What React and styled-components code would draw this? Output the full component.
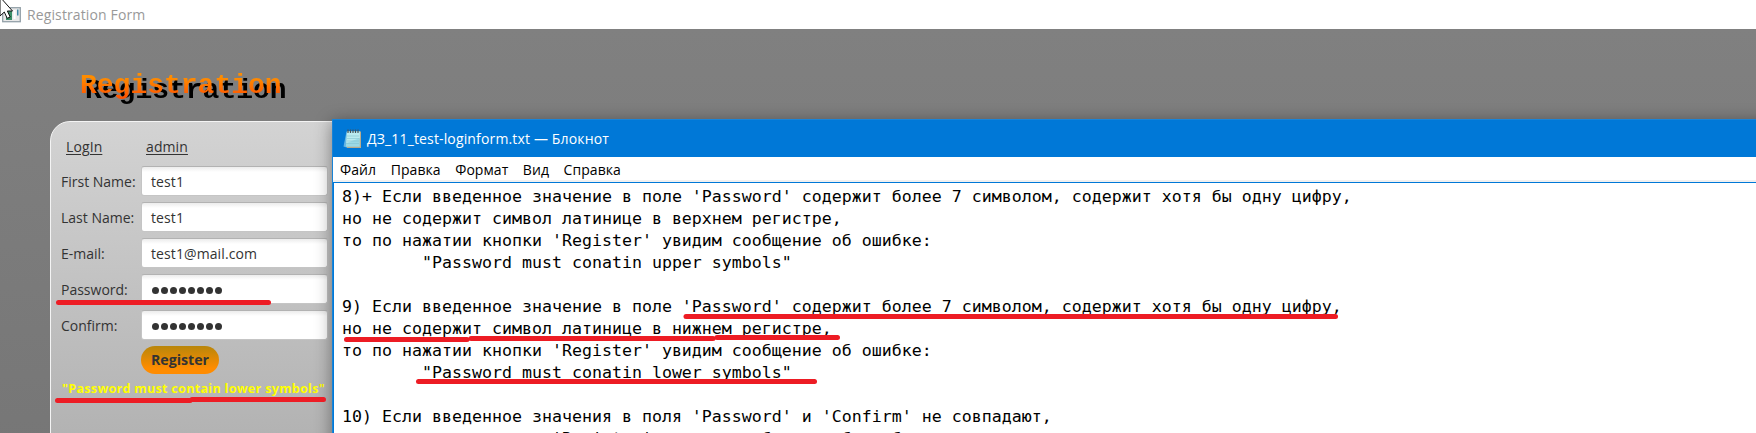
import React from 'react';
import styled, { createGlobalStyle } from 'styled-components';

const Global = createGlobalStyle`
  *, *::before, *::after { box-sizing: border-box; }
  body { margin: 0; overflow: hidden; background: #808080; }
`;

const Desktop = styled.div`
  position: relative;
  width: 1756px;
  height: 433px;
  overflow: hidden;
  font-family: 'Open Sans', 'Noto Sans', sans-serif;
  font-size: 14px;
`;

const FormWindow = styled.section`
  display: flex;
  flex-direction: column;
  height: 100%;
`;

const FormTitleBar = styled.header`
  display: flex;
  flex: none;
  align-items: center;
  gap: 6px;
  height: 29px;
  padding-left: 2px;
  background: #fff;
  color: #999;
  font-size: 14px;
  letter-spacing: 0.12px;
`;

const FormBody = styled.div`
  flex: 1;
  display: flex;
  flex-direction: column;
  padding-left: 50px;
  background: linear-gradient(#808080, #767676);
`;

const Heading = styled.h1`
  flex: none;
  height: 92px;
  margin: 0;
  padding: 42px 0 0 30px;
  font: bold 28px/30px 'Liberation Mono', monospace;
  filter: drop-shadow(5px 5px 0 #000);

  span {
    background: linear-gradient(#ff8c00 25%, #ff4d00 95%);
    background-clip: text;
    -webkit-background-clip: text;
    color: transparent;
  }
`;

const Card = styled.div`
  flex: none;
  display: flex;
  flex-direction: column;
  gap: 7px;
  width: 700px;
  height: 340px;
  padding: 10px 10px;
  border: 1px solid #f4f4f4;
  border-radius: 20px;
  background: linear-gradient(#d3d3d3, #b0b0b0);
  color: #333;
`;

const Row = styled.div`
  display: grid;
  grid-template-columns: 80px 187px;
  align-items: center;
  height: 29px;
`;

const Links = styled(Row)`
  height: 27px;
  padding: 2px 0 0 5px;
  letter-spacing: 0.1px;
  text-decoration: underline;
  text-underline-offset: 2px;
`;

const Label = styled.label`
  white-space: nowrap;
`;

const Field = styled.div`
  display: flex;
  align-items: center;
  gap: ${(p) => (p.$masked ? '2.05px' : 0)};
  height: 30px;
  padding: ${(p) => (p.$masked ? '2px 10px 0' : '0 9px')};
  border: 1px solid #c5c5c5;
  border-top-color: #b2b2b2;
  border-radius: 3px;
  background: linear-gradient(#ececec, #fff 5px);
  letter-spacing: 0.1px;
`;

const Dot = styled.i`
  width: 7px;
  height: 7px;
  border-radius: 50%;
  background: #333;
`;

const RegisterButton = styled.button`
  width: 78px;
  height: 28px;
  margin: 0 0 0 80px;
  padding: 0 0 1px;
  border: 0;
  border-radius: 14px;
  background: linear-gradient(#b8860b, #ff8c00 80%);
  color: #333;
  font: bold 14.2px 'Open Sans', sans-serif;
`;

const ErrorText = styled.p`
  margin: -1px 0 0 1px;
  color: #ff0;
  font: bold 12.5px/18px 'Open Sans', sans-serif;
  letter-spacing: 0.33px;
  white-space: nowrap;
`;

const Notepad = styled.section`
  position: absolute;
  left: 332px;
  top: 119px;
  width: 1450px;
  height: 340px;
  display: flex;
  flex-direction: column;
  border: 1px solid #1883d7;
  background: #fff;
  box-shadow: 0 3px 16px rgba(0, 0, 0, 0.42);
`;

const NoteTitle = styled.header`
  display: flex;
  flex: none;
  align-items: center;
  gap: 5px;
  height: 37px;
  padding-left: 10px;
  background: #0078d7;
  color: #fff;
  letter-spacing: 0.15px;
  white-space: nowrap;
`;

const Menu = styled.nav`
  display: flex;
  flex: none;
  align-items: center;
  gap: 14.5px;
  height: 26px;
  padding: 0 0 0 7px;
  border-bottom: 1px solid #0078d7;
  color: #000;
  font-size: 14px;
  letter-spacing: 0.07px;
  box-shadow: inset 0 -2px #f0f0f0;
`;

const Document = styled.pre`
  flex: 1;
  margin: 0;
  padding: 3px 0 0 8px;
  border-left: 1px solid #0078d7;
  overflow: hidden;
  color: #000;
  font: 16.6px/22px 'DejaVu Sans Mono', monospace;
  letter-spacing: 0.006px;
`;

const Overlay = styled.svg`
  position: absolute;
  inset: 0;
`;

const FormIcon = () => (
  <svg width="19" height="17" viewBox="0 0 19 17">
    <rect x="0.7" y="1.7" width="17.6" height="14" fill="#e9e9e9" stroke="#93a0a8" strokeWidth="1.3" />
    <rect x="4" y="5" width="6" height="9" fill="#3b8f68" />
    <rect x="11.5" y="4" width="2" height="9" fill="#fff" />
    <rect x="15" y="3.5" width="1.5" height="6" fill="#3f88a4" />
  </svg>
);

const NotepadIcon = () => (
  <svg width="19" height="20" viewBox="0 0 19 20">
    <path d="M3.5 2.5L0.5 17.5L5 19L6 3z" fill="#65b5e3" />
    <path d="M4 2.5H18V19H4z" fill="#b8ac8d" />
    <path d="M4 2.5H16.8V17.8H2.8z" fill="#9bdae5" />
    <path d="M4 2.5H16.8V9L3.5 14z" fill="#bcebf0" />
    <path d="M4 7H16M4 9.5H16M4 12H16M3 14.5H16" stroke="#83c4d2" strokeWidth="0.6" />
    <path d="M5 0.5V4M7.5 0.5V4M10 0.5V4M12.5 0.5V4M15 0.5V4" stroke="#45545d" strokeWidth="1.2" />
  </svg>
);

const fields = [
  { label: 'First Name:', value: 'test1' },
  { label: 'Last Name:', value: 'test1' },
  { label: 'E-mail:', value: 'test1@mail.com' },
  { label: 'Password:', masked: true },
  { label: 'Confirm:', masked: true },
];

const noteText = `8)+ Если введенное значение в поле 'Password' содержит более 7 символом, содержит хотя бы одну цифру,
но не содержит символ латинице в верхнем регистре,
то по нажатии кнопки 'Register' увидим сообщение об ошибке:
        "Password must conatin upper symbols"

9) Если введенное значение в поле 'Password' содержит более 7 символом, содержит хотя бы одну цифру,
но не содержит символ латинице в нижнем регистре,
то по нажатии кнопки 'Register' увидим сообщение об ошибке:
        "Password must conatin lower symbols"

10) Если введенное значения в поля 'Password' и 'Confirm' не совпадают,
то по нажатии кнопки 'Register' увидим сообщение об ошибке:`;

const marks = [
  'M58.5 302.5H268.5',
  'M57.5 400.5H190M192 399.5H323.5',
  'M686 316.5H1335.5',
  'M346.5 339.5H467M471 338.5H713M717 337.5H837.5',
  'M418.5 381.5H814.5',
];

export default function App() {
  return (
    <Desktop>
      <Global />
      <FormWindow>
        <FormTitleBar>
          <FormIcon />
          Registration Form
        </FormTitleBar>
        <FormBody>
          <Heading><span>Registration</span></Heading>
          <Card>
            <Links>
              <span>LogIn</span>
              <span>admin</span>
            </Links>
            {fields.map((f) => (
              <Row key={f.label}>
                <Label>{f.label}</Label>
                <Field $masked={f.masked}>
                  {f.masked ? Array.from({ length: 8 }, (_, i) => <Dot key={i} />) : f.value}
                </Field>
              </Row>
            ))}
            <RegisterButton>Register</RegisterButton>
            <ErrorText>"Password must contain lower symbols"</ErrorText>
          </Card>
        </FormBody>
      </FormWindow>
      <Notepad>
        <NoteTitle>
          <NotepadIcon />
          ДЗ_11_test-loginform.txt — Блокнот
        </NoteTitle>
        <Menu>
          {['Файл', 'Правка', 'Формат', 'Вид', 'Справка'].map((m) => <span key={m}>{m}</span>)}
        </Menu>
        <Document>{noteText}</Document>
      </Notepad>
      <Overlay width="1756" height="433">
        {marks.map((d) => (
          <path key={d} d={d} fill="none" stroke="#ed1c24" strokeWidth="5" strokeLinecap="round" />
        ))}
        <path d="M0 -3V16L4.3 12L7.2 18.3L10.2 17L7.4 11H12.5Z" fill="#fff" stroke="#111" strokeWidth="1" />
      </Overlay>
    </Desktop>
  );
}
